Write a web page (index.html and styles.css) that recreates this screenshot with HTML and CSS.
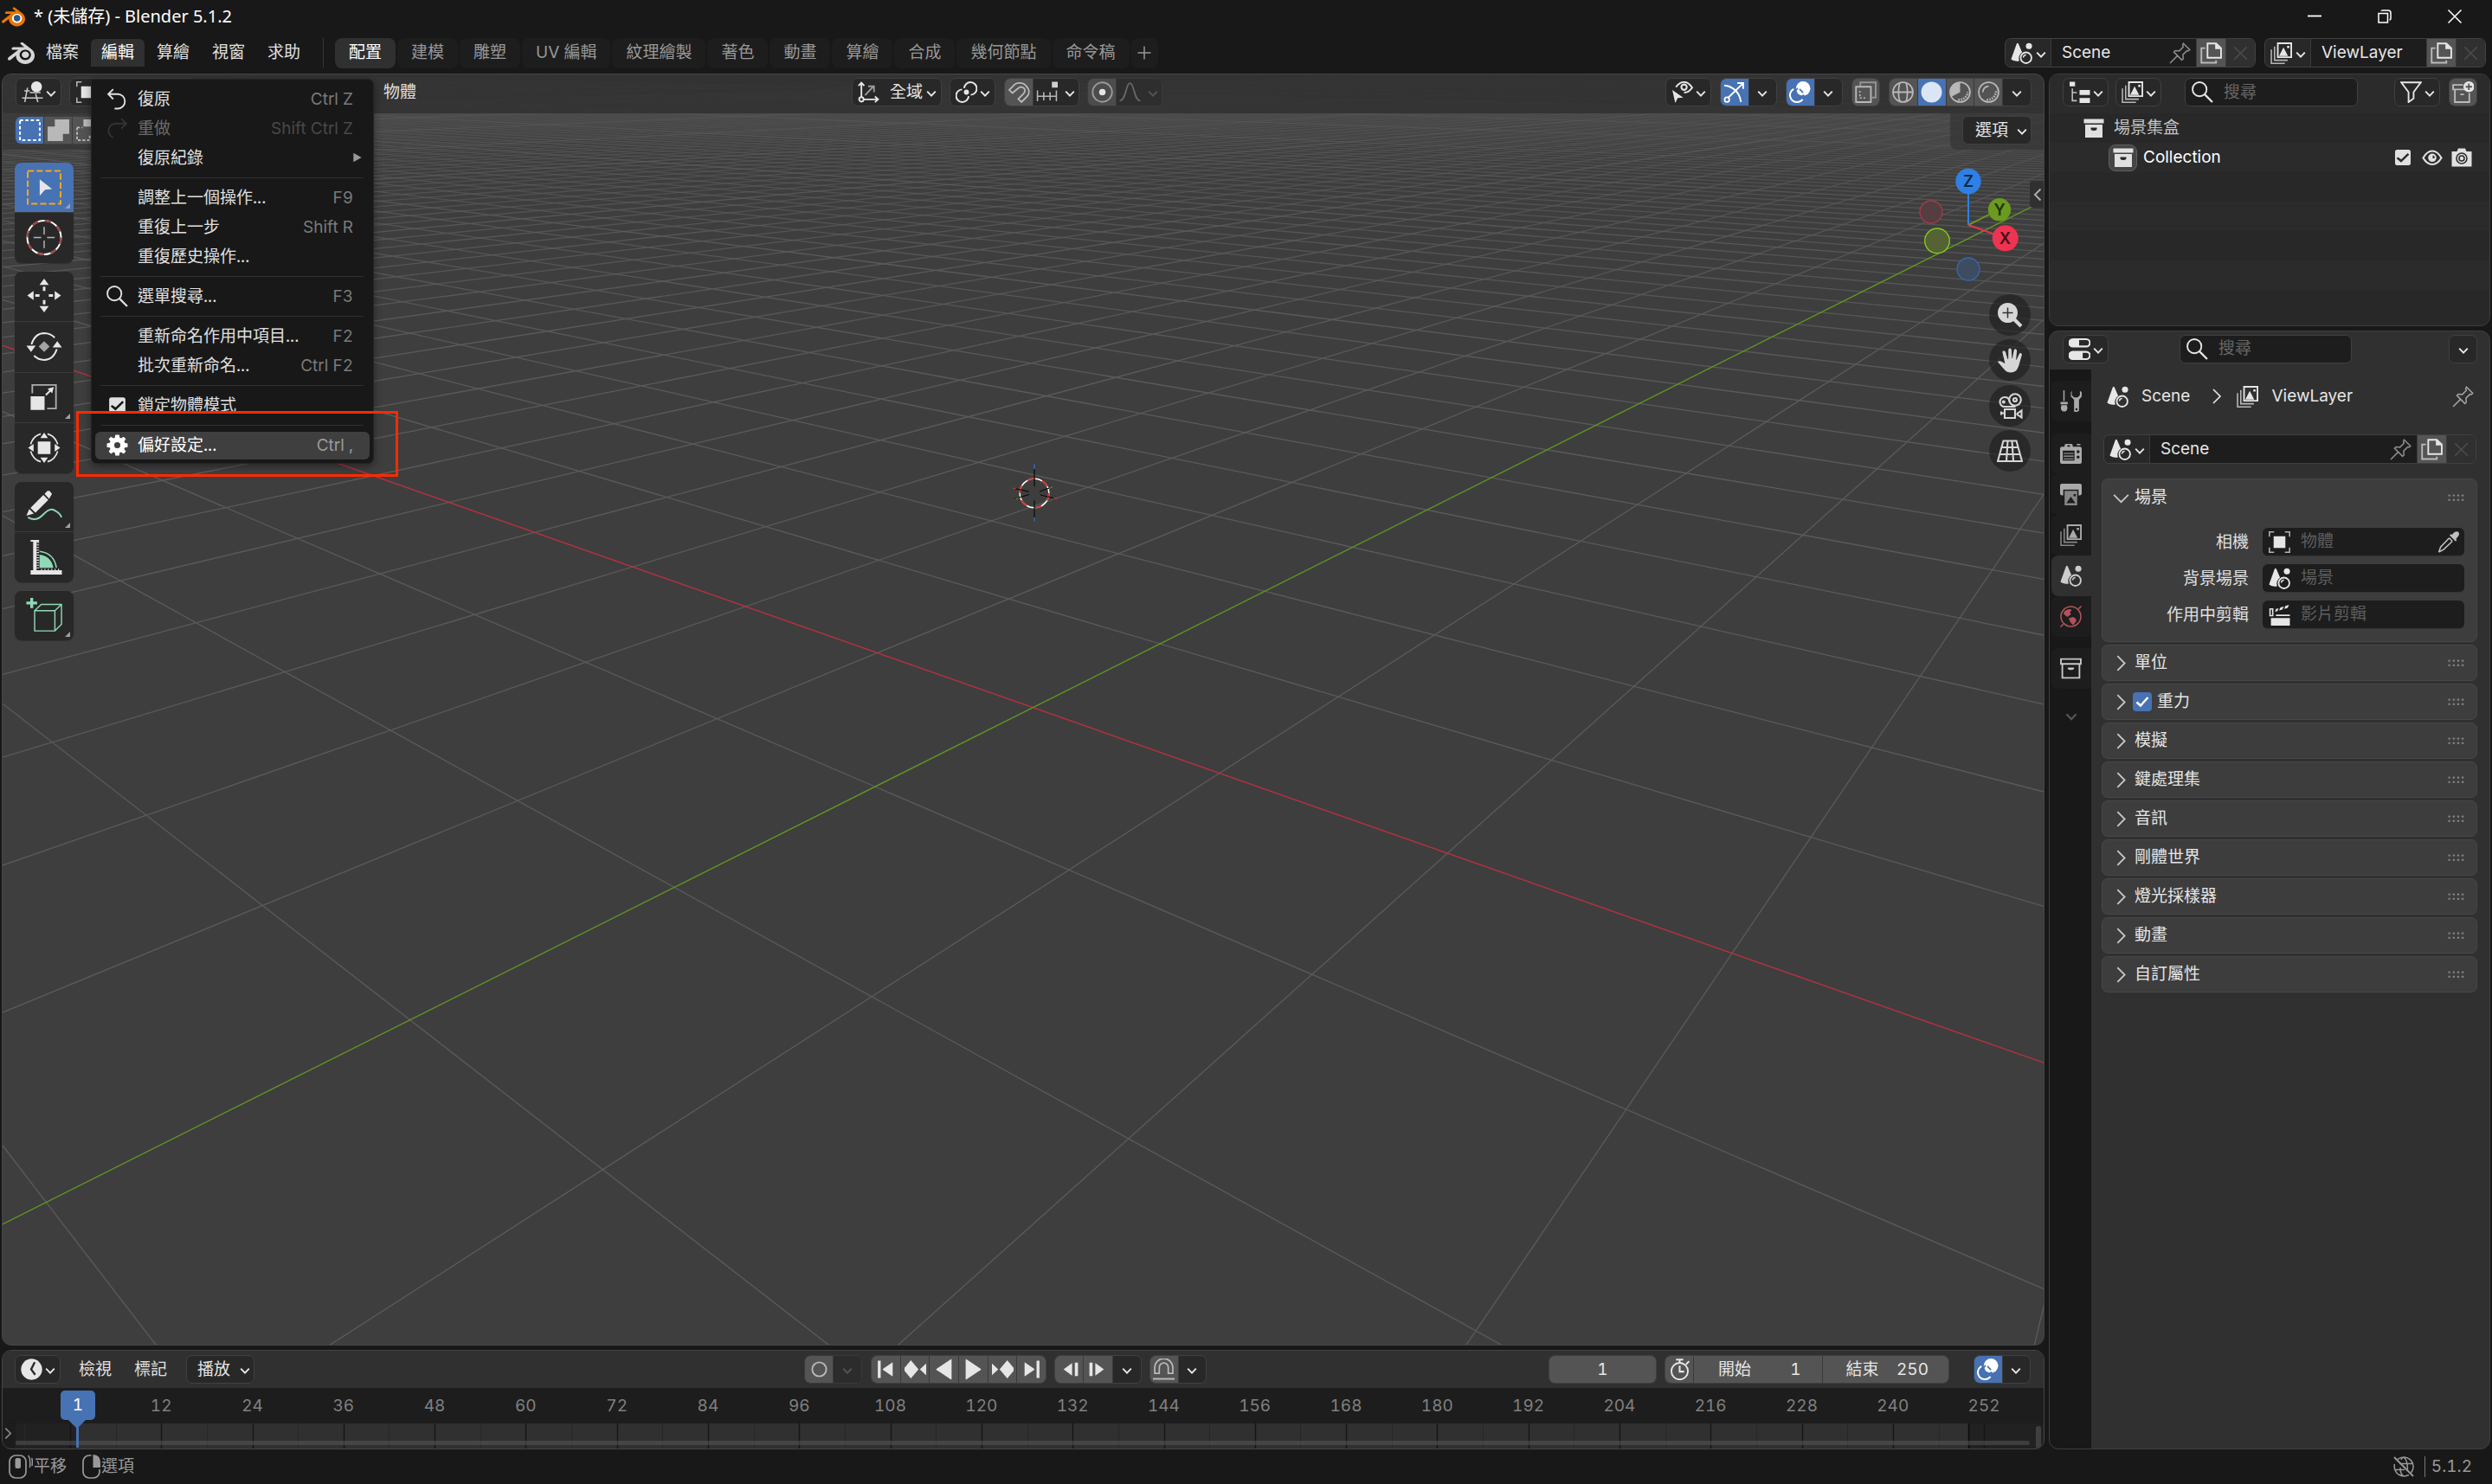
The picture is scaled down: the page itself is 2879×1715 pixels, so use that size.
FILE: index.html
```html
<!DOCTYPE html>
<html lang="zh-Hant">
<head>
<meta charset="utf-8">
<title>* (未儲存) - Blender 5.1.2</title>
<link rel="stylesheet" href="styles.css">
</head>
<body>
<svg class="defs" aria-hidden="true">
  <symbol id="blender" viewBox="0 0 24 24"><path fill="currentColor" d="M12.51 13.214c.046-.8.438-1.506 1.03-2.006a3.424 3.424 0 0 1 2.212-.79c.85 0 1.631.3 2.211.79.592.5.983 1.206 1.028 2.005.045.823-.285 1.586-.865 2.153a3.389 3.389 0 0 1-2.374.938 3.393 3.393 0 0 1-2.376-.938c-.58-.567-.91-1.33-.865-2.152M7.35 14.831c.006.314.106.922.256 1.398a7.372 7.372 0 0 0 1.593 2.757 8.227 8.227 0 0 0 2.787 2.001 8.947 8.947 0 0 0 3.66.76 8.964 8.964 0 0 0 3.657-.772 8.285 8.285 0 0 0 2.785-2.01 7.428 7.428 0 0 0 1.592-2.762 6.964 6.964 0 0 0 .25-3.074 7.123 7.123 0 0 0-1.016-2.779 7.764 7.764 0 0 0-1.852-2.043h.002L13.566 2.55l-.02-.015c-.492-.378-1.319-.376-1.86.002-.547.382-.609 1.015-.123 1.415l-.001.001 3.126 2.543-9.53.01h-.013c-.788.001-1.545.518-1.695 1.172-.154.665.38 1.217 1.2 1.22V8.9l4.83-.01-8.62 6.617-.034.025c-.813.622-1.075 1.658-.563 2.315.52.667 1.625.668 2.447.004L7.414 14s-.069.52-.063.831zm12.09 1.741c-.97.988-2.326 1.548-3.795 1.55-1.47.004-2.827-.552-3.797-1.538a4.51 4.51 0 0 1-1.036-1.622 4.282 4.282 0 0 1 .282-3.519 4.702 4.702 0 0 1 1.153-1.371c.942-.768 2.141-1.183 3.396-1.185 1.256-.002 2.455.41 3.398 1.175.48.391.87.854 1.152 1.367a4.28 4.28 0 0 1 .522 1.706 4.236 4.236 0 0 1-.239 1.811 4.54 4.54 0 0 1-1.035 1.626"/></symbol>
  <symbol id="chev" viewBox="0 0 12 12"><path class="s" stroke-width="1.9" d="M1.2 3.6 6 8.6 10.8 3.6"/></symbol>
  <symbol id="chev-l" viewBox="0 0 24 24"><path class="s" stroke-width="1.7" d="M4 8.5 12 16.500 20 8.5"/></symbol>
  <symbol id="chev-r" viewBox="0 0 24 24"><path class="s" stroke-width="1.7" d="M8 4 16 12 8 20"/></symbol>
  <symbol id="scene" viewBox="0 0 24 24"><path class="f" d="M6.6 1.4Q7.6-.2 8.500 1.400L12.600 11A8 8 0 0 0 9.500 20.600Q3 21.500.4 18.800Z"/><circle class="f" cx="20.200" cy="4" r="3.400"/><circle class="s" cx="17" cy="17" r="6"/><path class="s" stroke-width="1.4" d="M14 16.800a3 3 0 0 1 3-2.900"/></symbol>
  <symbol id="layers" viewBox="0 0 24 24"><path class="s" d="M8.200.9h14.900v15.500H8.200z"/><path class="f" d="M9.600 15 14.500 5.500 19.500 15zM18.500 3.800h2.500v2.500h-2.500z"/><path class="s" stroke-width="1.500" opacity=".75" d="M4.600 4.500v15.300h14.500M1 8v15.200h15"/></symbol>
  <symbol id="pin" viewBox="0 0 24 24"><path class="s" stroke-width="1.500" d="m15.800 1.200 7 7-1.600 1.300-1.500-.3-4.400 4.400.3 4.600-1.500 1.300L5.300 10.700l1.300-1.500 4.600.3 4.400-4.400-.6-2zM9 15l-8 8"/></symbol>
  <symbol id="copy" viewBox="0 0 24 24"><path class="s" d="M8 1.200h9.500l5.500 5.300V17H8z"/><path class="f" d="M16.500 1v6.500H23z"/><path class="s" opacity=".7" d="M5.500 6.300H1.200v16.300h16.300V20"/></symbol>
  <symbol id="x" viewBox="0 0 24 24"><path class="s" stroke-width="1.500" d="m5 5 14 14M19 5 5 19"/></symbol>
  <symbol id="plus" viewBox="0 0 24 24"><path class="s" d="M12 3v18M3 12h18"/></symbol>
  <symbol id="search" viewBox="0 0 24 24"><circle class="s" cx="8.800" cy="8.800" r="7.800"/><path class="s" stroke-width="2.200" d="m14.500 14.500 8.500 8.500"/></symbol>
  <symbol id="view3d" viewBox="0 0 24 24"><g opacity=".85"><path class="s" stroke-width="1.500" d="M3 10.500h6M.5 18.500h23M6.500 7 3.500 23M15.500 14l2.500 9M9 12.500h12"/></g><circle class="f" cx="16.500" cy="6" r="6"/></symbol>
  <symbol id="object" viewBox="0 0 24 24"><path class="f" d="M5.500 5.500h13v13h-13z"/><path class="s" stroke-width="1.500" opacity=".75" d="M.8 6V.8H6M18 .8h5.200V6M23.200 18v5.200H18M6 23.200H.8V18"/></symbol>
  <symbol id="undo" viewBox="0 0 24 24"><path class="s" d="M7.500 1 2 6.500 7.500 12M2 6.500h10.500a8 8 0 0 1 0 16H9"/></symbol>
  <symbol id="redo" viewBox="0 0 24 24"><path class="s" d="M16.500 1 22 6.500 16.500 12M22 6.500H10.500a8 8 0 0 0-3 15.500"/></symbol>
  <symbol id="gear" viewBox="0 0 24 24"><path class="f" fill-rule="evenodd" d="M9.900.5h4.200l.6 3.200 1.600.7L19 2.600l2.500 2.500L19.700 7.800l.6 1.600 3.200.6v4.100l-3.200.6-.6 1.600 1.800 2.700L19 21.500l-2.700-1.800-1.600.6-.6 3.200H9.900l-.6-3.200-1.600-.6L5 21.500 2.500 19l1.800-2.700-.6-1.600-3.200-.6V10l3.200-.6.6-1.600L2.500 5.100 5 2.600l2.700 1.800 1.600-.7zM12 8.600a3.400 3.400 0 1 0 0 6.800 3.400 3.400 0 0 0 0-6.800z"/></symbol>
  <symbol id="check" viewBox="0 0 24 24"><path fill="currentColor" fill-rule="evenodd" d="M5.500 3h13A2.500 2.500 0 0 1 21 5.500v13a2.500 2.500 0 0 1-2.500 2.500h-13A2.500 2.500 0 0 1 3 18.500v-13A2.500 2.500 0 0 1 5.500 3zM6.200 11.500l-1.500 1.700 5.300 4.600 9.300-9.100-1.700-1.800-7.500 7.300z"/></symbol>
  <symbol id="orient" viewBox="0 0 24 24"><circle class="s" cx="4" cy="20" r="2.500"/><path class="s" d="M4 17.500V2M.8 5 4 1.500 7.200 5M6.500 20H22M19 16.800l3.500 3.200-3.500 3.200"/><path class="s" opacity=".6" d="M8 15.500 17 6M11.500 5.500H18V12"/></symbol>
  <symbol id="pivot" viewBox="0 0 24 24"><circle class="f" cx="12" cy="12" r="2.800"/><path class="s" stroke-width="1.900" d="M9.500 7.500A7 7 0 1 1 16.800 15M14.500 16.500A7 7 0 1 1 7.200 9"/></symbol>
  <symbol id="magnet" viewBox="0 0 24 24"><path class="s" d="M1 9.500 4.600 6 A9.500 9.500 0 0 1 20 5.500C24 9.500 23.500 14 20 17.500L14.500 23 11 19.500 16.500 14C19 11.500 18.800 9 17 7.500 15 5.800 12.500 6 10.500 8L4.500 13z"/></symbol>
  <symbol id="snap" viewBox="0 0 24 24"><path class="s" stroke-width="1.500" opacity=".85" d="M1.500 10v12M8.500 12v9M15.500 12v9M22.500 10v12M1 16.500h22"/><path class="f" d="M17.500.5h6.500v6.500h-6.500z"/></symbol>
  <symbol id="prop" viewBox="0 0 24 24"><circle class="f" cx="12" cy="12" r="3.600"/><circle class="s" opacity=".5" cx="12" cy="12" r="10.800"/></symbol>
  <symbol id="falloff" viewBox="0 0 24 24"><path class="s" d="M.5 21.500C8 21.500 7 2 12 2s4 19.500 11.500 19.500"/></symbol>
  <symbol id="vis" viewBox="0 0 24 24"><path class="s" stroke-width="1.900" d="M5 6.500Q9 .8 14 .8t9 6.200q-3.500 5.500-9 5.500"/><circle class="s" stroke-width="2" cx="14" cy="6.500" r="3"/><path class="f" d="M1 9.500 13 18l-6 .5L4.200 24z"/></symbol>
  <symbol id="gizmo" viewBox="0 0 24 24"><circle class="s" stroke-width="1.700" cx="4" cy="20.300" r="2.600"/><path class="s" stroke-width="1.900" d="M5.500 18 21 3M15.500 2H22v6.500M1 4.500C9 5 18 11 19.500 23"/></symbol>
  <symbol id="overlay" viewBox="0 0 24 24"><circle class="f" cx="15.500" cy="8" r="8"/><path class="s" stroke-width="1.900" d="M5 8.500A7.800 7.800 0 1 0 15 20"/><path fill="none" stroke="#4772b3" stroke-width="1.700" d="M6.500 14q0-4 3-6.500M9.500 17.300q4 .5 7-2.300M11.500 8.500l4 4"/></symbol>
  <symbol id="xray" viewBox="0 0 24 24"><path class="s" d="M1.200 6h16.500v17H1.200z"/><path class="s" opacity=".65" d="M6 5V1.200h17V18h-4"/><path class="s" stroke-width="1.500" stroke-dasharray="2 2" d="M5.500 10.500v8h8"/></symbol>
  <symbol id="wire" viewBox="0 0 24 24"><g class="s" stroke-width="1.700"><circle cx="12" cy="12" r="11"/><path d="M1 12h22M8.500 1.500q-3 10.500 0 21M15.500 1.500q3 10.500 0 21"/></g></symbol>
  <symbol id="solid" viewBox="0 0 24 24"><circle class="f" cx="12" cy="12" r="11.500"/></symbol>
  <symbol id="matprev" viewBox="0 0 24 24"><circle class="s" stroke-width="1.700" cx="12" cy="12" r="11"/><path class="f" d="M12 1v11l-9.500 5A11 11 0 0 1 12 1z"/><path class="s" stroke-width="2.500" stroke-dasharray="1.500 1.300" d="M10 20.500Q19.500 20 20.500 12"/></symbol>
  <symbol id="render" viewBox="0 0 24 24"><circle class="s" stroke-width="1.700" cx="12" cy="12" r="11"/><path class="s" stroke-width="1.700" d="M5.500 12A6.500 6.500 0 0 1 12 5.500"/><path class="s" stroke-width="2.500" stroke-dasharray="1.500 1.300" d="M10 20.500Q19.500 20 20.500 10"/></symbol>
  <symbol id="outliner" viewBox="0 0 24 24"><path class="f" d="M1 .5h6v5H1zM12 9.500h11.500V15H12zM12 18.500h11.500V24H12z"/><path class="s" stroke-width="1.500" opacity=".8" d="M4 8v13.500h5M4 12.500h5"/></symbol>
  <symbol id="filter" viewBox="0 0 24 24"><path class="s" d="M1.200 1.200h21.600L14.800 12v7L9.200 23V12z"/></symbol>
  <symbol id="newcol" viewBox="0 0 24 24"><path class="s" opacity=".7" d="M12 4H1v5h14M3 9.500V23h16V13M9 14.500h4"/><circle class="f" cx="18.500" cy="6" r="6"/><path fill="none" stroke="#545454" stroke-width="1.700" d="M18.500 2.500v7M15 6h7"/></symbol>
  <symbol id="box" viewBox="0 0 24 24"><path class="f" d="M.5 1.500h23v5H.5zM2 8h20v15H2z"/><path fill="#282828" d="M8.500 11.500h7v2q-1 1.500-3.500 1.500t-3.500-1.500z"/></symbol>
  <symbol id="box-o" viewBox="0 0 24 24"><path class="s" d="M1 1.500h22v5.500H1zM2.500 8v14.500h19V8"/><path class="f" d="M8.500 11h7v1.500q-1 1.200-3.500 1.200t-3.500-1.200z"/></symbol>
  <symbol id="eye" viewBox="0 0 24 24"><path class="s" stroke-width="2.200" d="M1.500 12.500Q6 4.500 12 4.500t10.500 8Q18 20 12 20T1.500 12.500z"/><circle class="f" cx="12" cy="12.300" r="4.800"/><path fill="#2b2b2b" d="M12.500 9.500a2.500 2.500 0 0 1 2 3.500h-2z"/></symbol>
  <symbol id="camera" viewBox="0 0 24 24"><path class="f" d="M.5 5h6l1.500-3.500h8L17.500 5h6v17.500H.5z"/><circle cx="12" cy="13" r="6" fill="none" stroke="#2b2b2b" stroke-width="1.600"/><circle cx="12" cy="13" r="3" fill="none" stroke="#2b2b2b" stroke-width="1.600"/></symbol>
  <symbol id="props" viewBox="0 0 24 24"><path class="f" fill-rule="evenodd" d="M4.500 0h15a4.700 4.700 0 0 1 0 10h-15a4.700 4.700 0 0 1 0-10zM11.500 2v6h8a3 3 0 0 0 0-6zM4.500 14h15a4.700 4.700 0 0 1 0 10h-15a4.700 4.700 0 0 1 0-10zM15.500 16v6h4a3 3 0 0 0 0-6z"/></symbol>
  <symbol id="tool" viewBox="0 0 24 24"><path class="f" d="M3.600 0h1.400v12H3.600zM.5 13h8v2.500h-8zM1.500 16.500h6q1.500 5-1 6.500-2 1-4 0-2.500-1.500-1-6.500z"/><path class="f" fill-rule="evenodd" d="M13 .5v5l2.500 2.500h4L22 5.500v-5l2 2V7l-3 3.500v12Q19.500 24.500 16 24q-.5-.5-.5-1.500v-12L12 7V2.500zM18.200 20a1.200 1.200 0 1 0 0 2.400 1.200 1.200 0 0 0 0-2.400z"/></symbol>
  <symbol id="rendertab" viewBox="0 0 24 24"><path class="f" fill-rule="evenodd" d="M5 4V2.500Q5 1 6.500 1h6Q14 1 14 2.500V4h8q2 0 2 2v15q0 2-2 2H2q-2 0-2-2V6q0-2 2-2zM3 8.500v11h13v-11zM20 8a1.700 1.700 0 1 0 0 3.400A1.700 1.700 0 0 0 20 8zM20 14a1.700 1.700 0 1 0 0 3.400A1.700 1.700 0 0 0 20 14zM8 2.500V4h3V2.500z"/><path class="f" d="M18.500 1h4v1.500h-4zM4 11h11v1H4zM4 14h11v1H4zM4 17h11v1H4z"/></symbol>
  <symbol id="output" viewBox="0 0 24 24"><path class="f" d="M2 0h20q2 0 2 2v9q0 1.500-2 2h-1.500V6.500h-17V13H2q-2-.5-2-2V2q0-2 2-2z"/><path class="f" opacity=".75" fill-rule="evenodd" d="M5 8h14v16H5zM7 21.500h10l-5-7zM15 11.500v2.500h2.500v-2.500z"/></symbol>
  <symbol id="world" viewBox="0 0 24 24"><circle class="s" stroke-width="1.500" cx="12" cy="12" r="11"/><path class="s" stroke-width="1.500" d="m.5 23.500 3-3M20.500 3.500l3-3"/><path class="f" d="M4.500 6.500Q8 3 12.500 4q.5 2-1.500 3l1 2.500-4 3L4 9zM9.500 14l5-1.500 3 2 .5 2.500-3.500 4.500-3-3z"/></symbol>
  <symbol id="dropper" viewBox="0 0 24 24"><path class="f" d="M20 .5q4-1 4 3-.5 2-3.500 5l1 1.500-1.500 1-6.500-6.500L14.500 3l1.500.8Q18.500 1 20 .5z"/><path class="s" stroke-width="1.500" d="m13 7.500-9.500 10L1.500 23M16.500 11 7 20l-5.500 3M13 7.500 16.500 11"/></symbol>
  <symbol id="clip" viewBox="0 0 24 24"><path class="f" d="M2.500 15.500h21V24h-21zM8 11.800h15.500v1.700H8zM8 5.500l3-.8L9.700 8l-2.500.6zM13 3.800l4-1-2 3.500-3.500.9zM18.500 2.200l4-1.200-1.500 3.400-3.700 1z"/><path class="s" stroke-width="1.500" d="M1.500 5.500h3V13h-3z"/></symbol>
  <symbol id="clock" viewBox="0 0 24 24"><circle class="f" cx="12" cy="12" r="11.700"/><path fill="none" stroke="#282828" stroke-width="2.200" d="M15.500 4 11.500 12l4.500 6"/></symbol>
  <symbol id="stopwatch" viewBox="0 0 24 24"><circle class="s" cx="12" cy="14" r="9.200"/><path class="s" stroke-width="2" d="M8 1.200h8M12 1.500V5M12 8v6.500h5M19 6.500 22.500 3"/></symbol>
  <symbol id="record" viewBox="0 0 24 24"><circle class="s" cx="12" cy="12" r="7.800"/></symbol>
  <symbol id="tfirst" viewBox="0 0 24 24"><path class="f" d="M3 2.500h3.200v19H3zM19.500 5v14Q19.500 20 18.500 19.300L9 12.800Q8 12 9 11.200L18.500 4.700Q19.500 4 19.500 5z"/></symbol>
  <symbol id="tprevk" viewBox="0 0 24 24"><path class="f" d="M7 2 15.500 12 7 22l-8.500-10zM25 4.500v15L17 12z"/></symbol>
  <symbol id="tback" viewBox="0 0 24 24"><path class="f" d="M20.500 1.500v21q0 1-1 .6L4 12.800Q3 12 4 11.200L19.500.9q1-.4 1 .6z"/></symbol>
  <symbol id="trwd" viewBox="0 0 24 24"><path class="f" d="M15 5v14L5.500 12zM18 4.500h3.500v15H18z"/></symbol>
  <symbol id="asnap" viewBox="0 0 24 24"><path class="s" stroke-width="1.700" d="M2 16.500V10a10 10 0 0 1 20 0v6.500h-5V10a5 5 0 0 0-10 0v6.500z"/><path class="s" stroke-width="1.900" d="M-.5 22.500h25"/></symbol>
  <symbol id="tri" viewBox="0 0 24 24"><path class="f" d="M4 3 20 12 4 21z"/></symbol>
  <symbol id="globe" viewBox="0 0 24 24"><g class="s" stroke-width="1.500"><path d="M5 3.500a11 11 0 0 1 15.500 15.500M1.300 9q-1 8 4.700 12 6 3.500 12 .5M7.500 8.500h15M1.500 15.500H13M8 13q0 8 4 10M9 4q1-2.500 3-3 4.500 3.500 4.500 14"/><path stroke-width="2" d="m1 1 22 22"/></g></symbol>
  <symbol id="mouse-m" viewBox="0 0 28 28"><rect class="s" stroke-width="1.700" x="1" y="1" width="19" height="26" rx="7"/><rect class="f" x="7.500" y="4" width="6.500" height="12" rx="2"/><path class="s" stroke-width="1.500" d="M22.500 1q3 3 2 14M26.500 4q1.500 2 .5 9"/></symbol>
  <symbol id="mouse-r" viewBox="0 0 28 28"><path class="s" stroke-width="1.700" d="M10.500 1H8a7 7 0 0 0-7 7v12a7 7 0 0 0 7 7h5a7 7 0 0 0 7-7v-3"/><path class="f" d="M12.500 0Q21 .5 21 9v6h-8.500z"/></symbol>
  <symbol id="nzoom" viewBox="0 0 30 30"><circle class="f" cx="12.500" cy="12.500" r="11.500"/><path class="s" stroke-width="4" d="m20 20 8 8"/><path fill="none" stroke="#303030" stroke-width="1.500" d="M12.500 6.500v12M6.500 12.500h12"/></symbol>
  <symbol id="nhand" viewBox="0 0 30 30"><path class="f" d="M15 1.500q1.700 0 1.900 2l.4 9.500.6 0 1.800-9.200q.6-1.800 2.100-1.400 1.500.4 1.300 2.300l-1 9.800.6.300L25.800 8q.9-1.300 2.200-.7 1.300.7.800 2.300L26 19q-1.500 6-4 8.500-2.500 2-6 2-4.500 0-7-3L2.500 19Q.5 17.500 1.500 16.500q2-1 5 1l2.500 1.500.3-.5L6.500 6.500Q6.200 4.500 7.800 4.200 9.200 4 9.900 5.700l2.500 8.300.8-.2.1-10.300q.1-2 1.700-2z"/></symbol>
  <symbol id="ncam" viewBox="0 0 30 30"><g class="s" stroke-width="2.100"><circle cx="21" cy="8" r="6.800"/><path d="M14.500 10Q14 5 9 5a5.500 5.500 0 1 0 0 11h12.500"/><path d="M9 19h12v10H9zM9 23.500H5M5 21.500v4M28.500 20.500v8L23.500 25v-1z"/></g><circle class="s" stroke-width="2.200" cx="21" cy="8" r="2"/><circle class="f" cx="7.800" cy="10.500" r="2"/></symbol>
  <symbol id="ngrid" viewBox="0 0 30 30"><path class="s" stroke-width="2.100" d="M7.500 3.500h15L29 27H1zM5.500 11h19M3.500 19h23.500M12.500 3.500 11 27M17.500 3.500 19 27"/></symbol>
</svg>

<header class="titlebar">
  <svg class="logo" viewBox="0 0 24 24"><circle cx="15.700" cy="13.400" r="6" fill="#fff"/><use href="#blender" color="#ea7600"/><circle cx="15.700" cy="13.400" r="3.300" fill="#265787"/></svg>
  <h1>* (未儲存) - Blender 5.1.2</h1>
  <div class="win">
    <svg viewBox="0 0 16 16"><path class="s" d="M0 7.500h16"/></svg>
    <svg viewBox="0 0 16 16"><path class="s" stroke-width="1.500" d="M1 4.500h10.500V15H1zM4 1.800Q4 1 6 1h6q3 0 3 3v6q0 2-1.500 2"/></svg>
    <svg viewBox="0 0 16 16"><path class="s" stroke-width="1.500" d="m.5.500 15 15M15.500.5l-15 15"/></svg>
  </div>
</header>

<nav class="topbar">
  <svg class="app"><use href="#blender"/></svg>
  <a class="m">檔案</a><a class="m on">編輯</a><a class="m">算繪</a><a class="m">視窗</a><a class="m">求助</a>
  <i class="vr"></i>
  <div class="tabs">
    <a class="on">配置</a><a>建模</a><a>雕塑</a><a>UV 編輯</a><a>紋理繪製</a><a>著色</a><a>動畫</a><a>算繪</a><a>合成</a><a>幾何節點</a><a>命令稿</a><a class="add"><svg><use href="#plus"/></svg></a>
  </div>
  <div class="grp sel scene-sel">
    <span class="cell dd"><svg><use href="#scene"/></svg><svg class="c"><use href="#chev"/></svg></span>
    <span class="cell name"><b>Scene</b><svg class="dim"><use href="#pin"/></svg></span>
    <span class="cell g"><svg><use href="#copy"/></svg></span>
    <span class="cell off"><svg><use href="#x"/></svg></span>
  </div>
  <div class="grp sel layer-sel">
    <span class="cell dd"><svg><use href="#layers"/></svg><svg class="c"><use href="#chev"/></svg></span>
    <span class="cell name"><b>ViewLayer</b></span>
    <span class="cell g"><svg><use href="#copy"/></svg></span>
    <span class="cell off"><svg><use href="#x"/></svg></span>
  </div>
</nav>

<main>
  <div class="left">
    <section class="area viewport">
      <svg class="grid" id="grid" viewBox="3 86 2358 1468" preserveAspectRatio="none">
        <defs>
          <linearGradient id="fadeMinor" gradientUnits="userSpaceOnUse" x1="0" y1="86" x2="0" y2="460"><stop offset="0" stop-color="#5a5a5a" stop-opacity=".1"/><stop offset=".2" stop-color="#5a5a5a" stop-opacity=".45"/><stop offset=".5" stop-color="#5a5a5a" stop-opacity=".8"/><stop offset="1" stop-color="#5a5a5a"/></linearGradient>
          <linearGradient id="fadeMajor" gradientUnits="userSpaceOnUse" x1="0" y1="66" x2="0" y2="320"><stop offset="0" stop-color="#5a5a5a" stop-opacity=".1"/><stop offset=".3" stop-color="#5a5a5a" stop-opacity=".7"/><stop offset="1" stop-color="#5a5a5a"/></linearGradient>
        </defs>
      </svg>
      <svg class="cursor" viewBox="0 0 56 70">
        <circle cx="28" cy="35" r="16.800" fill="none" stroke="#fff" stroke-width="1.500"/>
        <circle cx="28" cy="35" r="16.800" fill="none" stroke="#e0281e" stroke-width="1.600" stroke-dasharray="8.800 8.790"/>
        <g fill="none" stroke="#0a0a0a" stroke-width="1.200"><path d="M28 7v20M28 43.500V63M5 29.500l16.500 3.700M35 37l17 4M34 33l14-5M22 36.500l-17 5"/></g>
        <path stroke="#2f80e6" d="M28 1.500V7M28 63v4.500"/><path stroke="#e03248" d="m3 29 3.500.7M50 40.500l4 .8"/><path stroke="#6da21e" d="m45 29.300 4-1.500M9.500 40.500 6 42"/>
      </svg>
      <div class="vhead">
        <div class="grp b52"><span class="cell dd"><svg><use href="#view3d"/></svg><svg class="c"><use href="#chev"/></svg></span></div>
        <div class="grp mode"><span class="cell"><svg><use href="#object"/></svg></span></div>
        <a class="objmenu">物體</a>
        <div class="grp orient"><span class="cell dd"><svg><use href="#orient"/></svg><em>全域</em><svg class="c"><use href="#chev"/></svg></span></div>
        <div class="grp b52 pivot"><span class="cell dd"><svg><use href="#pivot"/></svg><svg class="c"><use href="#chev"/></svg></span></div>
        <div class="grp snapg"><span class="cell g"><svg class="soft"><use href="#magnet"/></svg></span><span class="cell dd"><svg class="soft2"><use href="#snap"/></svg><svg class="c"><use href="#chev"/></svg></span></div>
        <div class="grp snapg faded"><span class="cell g"><svg><use href="#prop"/></svg></span><span class="cell dd"><svg class="dim"><use href="#falloff"/></svg><svg class="c dim2"><use href="#chev"/></svg></span></div>
        <div class="grp b52 visg"><span class="cell dd"><svg><use href="#vis"/></svg><svg class="c"><use href="#chev"/></svg></span></div>
        <div class="grp two"><span class="cell blue"><svg><use href="#gizmo"/></svg></span><span class="cell"><svg class="c"><use href="#chev"/></svg></span></div>
        <div class="grp two"><span class="cell blue"><svg><use href="#overlay"/></svg></span><span class="cell"><svg class="c"><use href="#chev"/></svg></span></div>
        <div class="grp one"><span class="cell g"><svg class="soft"><use href="#xray"/></svg></span></div>
        <div class="grp shade"><span class="cell g"><svg class="soft"><use href="#wire"/></svg></span><span class="cell blue"><svg class="pale"><use href="#solid"/></svg></span><span class="cell g"><svg class="soft"><use href="#matprev"/></svg></span><span class="cell g"><svg class="soft"><use href="#render"/></svg></span><span class="cell"><svg class="c"><use href="#chev"/></svg></span></div>
      </div>
      <div class="vsub">
        <div class="slab sl">
          <div class="grp modes"><span class="cell blue"><svg viewBox="0 0 24 24"><path class="s" stroke-width="2" stroke-dasharray="3.500 2.500" d="M1 1h22v22H1z"/></svg></span><span class="cell g"><svg viewBox="0 0 24 24" class="soft"><path class="f" d="M8 0h16v16h-7v8H0V8h8z"/></svg></span><span class="cell g"><svg viewBox="0 0 24 24" class="soft"><path class="f" d="M8 0h16v16h-7V8H8z"/><path class="s" stroke-dasharray="3 2" d="M1 9v14h14v-6M1 9h6"/></svg></span></div>
        </div>
        <div class="slab sr"><div class="grp opts"><span class="cell dd"><em>選項</em><svg class="c"><use href="#chev"/></svg></span></div></div>
      </div>
      <div class="tools">
        <div class="tg">
          <span class="t on"><svg viewBox="0 0 40 40"><path fill="none" stroke="#f5a623" stroke-width="2" stroke-dasharray="7 3" d="M1.500 1.500h37v37h-37z"/><path class="f" d="m15 11 14 11-8 .8L15 29.500z"/></svg><i></i></span>
          <span class="t"><svg viewBox="0 0 42 42"><circle cx="21" cy="21" r="20" fill="none" stroke="#fff" stroke-width="2"/><circle cx="21" cy="21" r="20" fill="none" stroke="#9c4346" stroke-width="2.200" stroke-dasharray="7.850 7.850"/><path class="s" stroke-width="1.500" opacity=".75" d="M21 8.500v9M21 24.500v9M8.500 21h9M24.500 21h9"/></svg></span>
        </div>
        <div class="tg">
          <span class="t"><svg viewBox="0 0 42 42"><path class="f" d="m21 1 5.500 7.500h-11zM21 41l5.500-7.500h-11zM1 21l7.500-5.500v11zM41 21l-7.500-5.500v11zM19.500 10.500h3v5h-3zM19.500 26.500h3v5h-3zM10.500 19.500h5v3h-5zM26.500 19.500h5v3h-5z"/></svg></span>
          <span class="t"><svg viewBox="0 0 42 42"><path class="s" stroke-width="2" d="M6 18.500Q10 5.500 21 5.200q7.500.2 12.500 5.300M36 24q-4 12.500-15 12.800-7 0-12-5"/><path class="f" d="M0 20h11L5.500 27.500zM31 22l5.500-7.500L42 22z"/><path class="f" opacity=".65" d="m21 14.500 6.500 6.500-6.500 6.500-6.500-6.500z"/></svg></span>
          <span class="t"><svg viewBox="0 0 42 42"><path class="s" stroke-width="1.900" opacity=".7" d="M7 17V7h28v28H24.500"/><path class="f" d="M5 20.500h16.500v16H5z"/><path class="s" stroke-width="2" d="m23 19 6-6"/><path class="f" d="M25 11.500 32.500 9.500 30.500 17z"/></svg><i></i></span>
          <span class="t"><svg viewBox="0 0 42 42"><path class="s" stroke-width="1.700" d="M5 17Q8 7 17 4.500M25 4.500Q34 7 37 17M37 25q-3 10-12 12.500M17 37.500Q8 35 5 25"/><path class="f" d="M13.500 13.500h15v15h-15zM21 3l4.500 6.500h-9zM21 39l4.500-6.500h-9zM2 21l6.500-4.500v9zM40 21l-6.500-4.500v9z"/></svg></span>
        </div>
        <div class="tg">
          <span class="t"><svg viewBox="0 0 44 42"><path fill="none" stroke="#8fd9b6" stroke-width="2" d="M2.500 35Q12 41 21 31.500t15-4Q41 30 43 35"/><path class="f" d="m.5 33 3.500-8 5.500 5.500zM5.500 23.500 21 8l6 6-15.500 15.500zM22.500 6.500 26 3l2.500 0 3 3.500-3.500 6z"/></svg><i></i></span>
          <span class="t"><svg viewBox="0 0 42 42"><path class="f" d="M5 1h10v2h-3v34h-4V3H5zM5 37h37v5H5z"/><path class="s" stroke-width="1.100" d="M12 4h3M12 7h3M12 10h3M12 13h3M12 16h3M12 19h3M12 22h3M12 25h3M12 28h3M12 31h3M12 34h3M18 35v3M22 35v3M26 35v3M30 35v3M34 35v3M38 35v3"/><path fill="#8fd9b6" d="M15.500 18.500Q29 20 32 34H15.500z"/><path fill="none" stroke="#8fd9b6" stroke-width="1.600" d="M15.500 14.500Q33 16.500 35.500 34"/></svg></span>
        </div>
        <div class="tg">
          <span class="t"><svg viewBox="0 0 44 42"><path fill="none" stroke="#8fd9b6" stroke-width="1.500" d="M10.500 16h24.500v24.500H10.500zM10.500 16l8-7.500H43v24L35 40.500M35 16l8-7.500"/><path stroke="#8fd9b6" stroke-width="3.500" d="M7 .5v12.500M.5 6.700h13"/></svg><i></i></span>
        </div>
      </div>
      <svg class="axes" viewBox="0 0 120 120">
        <g fill="none" stroke-width="2"><path stroke="#2f80e6" d="M60 65V15"/><path stroke="#6a9a1f" d="M60 65 96 47"/><path stroke="#e8364f" d="m60 65 42 15"/></g>
        <circle cx="60" cy="116" r="13" fill="#3d4c60" stroke="#3568ae" stroke-width="1.300"/>
        <circle cx="17" cy="50" r="13" fill="#543e41" stroke="#a63a4a" stroke-width="1.300"/>
        <circle cx="24" cy="83.300" r="14.300" fill="#546234" stroke="#86c91c" stroke-width="1.400"/>
        <circle cx="96" cy="47.300" r="13.200" fill="#6a9a1f"/><circle cx="102.700" cy="80.300" r="15" fill="#ed3450"/><circle cx="60" cy="14.500" r="14.700" fill="#2f80e6"/>
        <text x="60" y="21.200" fill="#0e2947">Z</text><text x="96" y="54" fill="#223208">Y</text><text x="102.500" y="87" fill="#4b0e17">X</text>
      </svg>
      <div class="navs"><svg><use href="#nzoom"/></svg><svg><use href="#nhand"/></svg><svg><use href="#ncam"/></svg><svg><use href="#ngrid"/></svg></div>
      <span class="npanel"><svg viewBox="0 0 10 16"><path class="s" stroke-width="2" d="M8.500 1.500 2 8l6.500 6.500"/></svg></span>
    </section>

    <section class="area timeline">
      <div class="thead">
        <div class="grp b52"><span class="cell dd"><svg><use href="#clock"/></svg><svg class="c"><use href="#chev"/></svg></span></div>
        <a class="m t1">檢視</a><a class="m">標記</a>
        <div class="grp playb"><span class="cell dd"><em>播放</em><svg class="c"><use href="#chev"/></svg></span></div>
        <div class="grp two rec"><span class="cell g"><svg class="soft"><use href="#record"/></svg></span><span class="cell dk"><svg class="c dim2"><use href="#chev"/></svg></span></div>
        <div class="grp trans"><span class="cell g"><svg><use href="#tfirst"/></svg></span><span class="cell g"><svg><use href="#tprevk"/></svg></span><span class="cell g"><svg><use href="#tback"/></svg></span><span class="cell g"><svg class="flip"><use href="#tback"/></svg></span><span class="cell g"><svg class="flip"><use href="#tprevk"/></svg></span><span class="cell g"><svg class="flip"><use href="#tfirst"/></svg></span></div>
        <div class="grp jump"><span class="cell g"><svg><use href="#trwd"/></svg></span><span class="cell g"><svg class="flip"><use href="#trwd"/></svg></span><span class="cell"><svg class="c"><use href="#chev"/></svg></span></div>
        <div class="grp two asn"><span class="cell g"><svg class="soft"><use href="#asnap"/></svg></span><span class="cell"><svg class="c"><use href="#chev"/></svg></span></div>
        <div class="grp frame"><span class="cell g"><em>1</em></span></div>
        <div class="grp range"><span class="cell g"><svg><use href="#stopwatch"/></svg></span><span class="cell g num"><em>開始</em><em>1</em></span><span class="cell g num"><em>結束</em><em>250</em></span></div>
        <div class="grp two tov"><span class="cell blue"><svg><use href="#overlay"/></svg></span><span class="cell"><svg class="c"><use href="#chev"/></svg></span></div>
      </div>
      <div class="ruler"><span>12</span><span>24</span><span>36</span><span>48</span><span>60</span><span>72</span><span>84</span><span>96</span><span>108</span><span>120</span><span>132</span><span>144</span><span>156</span><span>168</span><span>180</span><span>192</span><span>204</span><span>216</span><span>228</span><span>240</span><span>252</span></div>
      <svg class="track" id="track" viewBox="3 1645 2358 29"><rect x="90" y="1645" width="2184" height="29" fill="#303030"/></svg>
      <i class="hscroll"></i><i class="vscroll"></i>
      <span class="playhead"><b>1</b></span>
      <span class="chan"><svg viewBox="0 0 10 16"><path class="s" stroke-width="1.900" d="M1.500 1.500 8 8l-6.500 6.500"/></svg></span>
    </section>
  </div>

  <div class="right">
    <section class="area outliner">
      <div class="ohead">
        <div class="grp b52"><span class="cell dd"><svg><use href="#outliner"/></svg><svg class="c"><use href="#chev"/></svg></span></div>
        <div class="grp b52"><span class="cell dd"><svg><use href="#layers"/></svg><svg class="c"><use href="#chev"/></svg></span></div>
        <div class="grp find"><span class="cell"><svg><use href="#search"/></svg><em>搜尋</em></span></div>
        <div class="grp b52 filt"><span class="cell dd"><svg><use href="#filter"/></svg><svg class="c"><use href="#chev"/></svg></span></div>
        <div class="grp one"><span class="cell g"><svg><use href="#newcol"/></svg></span></div>
      </div>
      <div class="rows">
        <div class="row r0"><svg><use href="#box"/></svg><span>場景集盒</span></div>
        <div class="row r1"><i><svg><use href="#box"/></svg></i><span>Collection</span><svg class="ck"><use href="#check"/></svg><svg><use href="#eye"/></svg><svg><use href="#camera"/></svg></div>
        <div class="row"></div><div class="row"></div><div class="row"></div><div class="row"></div><div class="row last"></div>
      </div>
    </section>

    <section class="area props">
      <div class="phead">
        <div class="grp b52"><span class="cell dd"><svg><use href="#props"/></svg><svg class="c"><use href="#chev"/></svg></span></div>
        <div class="grp find"><span class="cell"><svg><use href="#search"/></svg><em>搜尋</em></span></div>
        <div class="grp one"><span class="cell"><svg class="c"><use href="#chev"/></svg></span></div>
      </div>
      <div class="pbody">
        <aside class="ptabs">
          <a class="solo"><svg><use href="#tool"/></svg></a>
          <a><svg><use href="#rendertab"/></svg></a><a><svg><use href="#output"/></svg></a><a><svg><use href="#layers"/></svg></a><a class="on"><svg><use href="#scene"/></svg></a><a class="red"><svg><use href="#world"/></svg></a>
          <a class="col"><svg><use href="#box-o"/></svg></a>
          <svg class="more"><use href="#chev"/></svg>
        </aside>
        <div class="pmain">
          <div class="crumb"><svg><use href="#scene"/></svg><span>Scene</span><svg class="ar"><use href="#chev-r"/></svg><svg><use href="#layers"/></svg><span>ViewLayer</span><svg class="pn"><use href="#pin"/></svg></div>
          <div class="grp sel idrow">
            <span class="cell dd"><svg><use href="#scene"/></svg><svg class="c"><use href="#chev"/></svg></span>
            <span class="cell name"><b>Scene</b><svg class="dim"><use href="#pin"/></svg></span>
            <span class="cell g"><svg><use href="#copy"/></svg></span>
            <span class="cell off"><svg><use href="#x"/></svg></span>
          </div>
          <div class="panel open">
            <div class="ph"><svg><use href="#chev-l"/></svg><span>場景</span><i class="dots"></i></div>
            <div class="fld"><label>相機</label><div><svg><use href="#object"/></svg><em>物體</em><svg class="dr"><use href="#dropper"/></svg></div></div>
            <div class="fld"><label>背景場景</label><div><svg><use href="#scene"/></svg><em>場景</em></div></div>
            <div class="fld"><label>作用中剪輯</label><div><svg><use href="#clip"/></svg><em>影片剪輯</em></div></div>
          </div>
          <div class="panel"><div class="ph"><svg><use href="#chev-r"/></svg><span>單位</span><i class="dots"></i></div></div>
          <div class="panel"><div class="ph"><svg><use href="#chev-r"/></svg><b class="cb"><svg viewBox="0 0 22 22"><path class="s" stroke-width="2.600" d="m4.500 11.500 4.500 4 8.500-9.500"/></svg></b><span>重力</span><i class="dots"></i></div></div>
          <div class="panel"><div class="ph"><svg><use href="#chev-r"/></svg><span>模擬</span><i class="dots"></i></div></div>
          <div class="panel"><div class="ph"><svg><use href="#chev-r"/></svg><span>鍵處理集</span><i class="dots"></i></div></div>
          <div class="panel"><div class="ph"><svg><use href="#chev-r"/></svg><span>音訊</span><i class="dots"></i></div></div>
          <div class="panel"><div class="ph"><svg><use href="#chev-r"/></svg><span>剛體世界</span><i class="dots"></i></div></div>
          <div class="panel"><div class="ph"><svg><use href="#chev-r"/></svg><span>燈光採樣器</span><i class="dots"></i></div></div>
          <div class="panel"><div class="ph"><svg><use href="#chev-r"/></svg><span>動畫</span><i class="dots"></i></div></div>
          <div class="panel"><div class="ph"><svg><use href="#chev-r"/></svg><span>自訂屬性</span><i class="dots"></i></div></div>
        </div>
      </div>
    </section>
  </div>
</main>

<footer>
  <svg><use href="#mouse-m"/></svg><span>平移</span>
  <svg class="m2"><use href="#mouse-r"/></svg><span>選項</span>
  <svg class="gl"><use href="#globe"/></svg><i></i><span class="ver">5.1.2</span>
</footer>

<div class="menu">
  <div class="it"><svg><use href="#undo"/></svg><span>復原</span><kbd>Ctrl Z</kbd></div>
  <div class="it dis"><svg><use href="#redo"/></svg><span>重做</span><kbd>Shift Ctrl Z</kbd></div>
  <div class="it sub"><span>復原紀錄</span><svg class="tri"><use href="#tri"/></svg></div>
  <hr>
  <div class="it"><span>調整上一個操作...</span><kbd>F9</kbd></div>
  <div class="it"><span>重復上一步</span><kbd>Shift R</kbd></div>
  <div class="it"><span>重復歷史操作...</span></div>
  <hr>
  <div class="it"><svg><use href="#search"/></svg><span>選單搜尋...</span><kbd>F3</kbd></div>
  <hr>
  <div class="it"><span>重新命名作用中項目...</span><kbd>F2</kbd></div>
  <div class="it"><span>批次重新命名...</span><kbd>Ctrl F2</kbd></div>
  <hr>
  <div class="it"><svg><use href="#check"/></svg><span>鎖定物體模式</span></div>
  <hr>
  <div class="it hot"><svg><use href="#gear"/></svg><span>偏好設定...</span><kbd>Ctrl ,</kbd></div>
</div>
<div class="mark"></div>
<script src="scene.js"></script>
</body>
</html>
```

FILE: styles.css
```css
* { box-sizing: border-box; }
html, body { margin: 0; height: 100%; }
body {
  width: 2879px; height: 1715px; overflow: hidden; position: relative;
  display: flex; flex-direction: column;
  background: #181818; color: #e0e0e0;
  font: 19px/22px Inter, "Noto Sans CJK TC", sans-serif;
  font-variant-numeric: tabular-nums;
}
svg { display: block; flex: none; width: 25px; height: 25px; overflow: visible; }
.defs { position: absolute; width: 0; height: 0; }
.s { fill: none; stroke: currentColor; }
.s:not([stroke-width]) { stroke-width: 1.8; }
.f { fill: currentColor; }
em, b, kbd, i { font-style: normal; font-weight: 400; font-family: inherit; font-size: inherit; }

/* title bar */
.titlebar { height: 38px; flex: none; display: flex; align-items: center; padding-left: 2px; }
.titlebar .logo { width: 27px; height: 27px; }
.titlebar h1 { margin: 0 0 0 10px; color: #fff; font: 20px/24px "Noto Sans", "Noto Sans CJK TC", sans-serif; white-space: nowrap; }
.win { margin-left: auto; display: flex; gap: 65px; padding-right: 35px; color: #fff; }
.win svg { width: 16px; height: 16px; }

/* top bar */
.topbar { height: 46px; flex: none; display: flex; align-items: center; }
.app { width: 31px; height: 31px; margin: 0 1px 0 9px; color: #d5d5d5; }
.m { width: 62px; height: 32px; margin-right: 2px; display: flex; align-items: center; justify-content: center; border-radius: 6px; }
.m.on { background: #303030; color: #fff; border-radius: 6px 6px 0 0; }
.vr { width: 1px; height: 34px; background: #353535; margin-left: 12px; }
.tabs { display: flex; gap: 2px; margin-left: 13px; }
.tabs a { height: 35px; padding: 0 16px; display: flex; align-items: center; background: #1d1d1d; color: #989898; border-radius: 8px; }
.tabs a.on { background: #303030; color: #fff; }
.tabs .add { padding: 0 6px 0 5px; }
.tabs .add svg { width: 20px; height: 20px; }

/* button groups */
.grp { display: flex; height: 33px; flex: none; border: 1px solid #404040; border-radius: 7px; overflow: hidden; background: #282828; color: #e6e6e6; }
.cell { display: flex; align-items: center; justify-content: center; flex: 1; border-left: 1px solid #3a3a3a; white-space: nowrap; }
.cell:first-child { border-left: 0; }
.cell.g { background: #545454; }
.cell.blue { background: #4772b3; color: #fff; }
.cell.dk { background: #2c2c2c; }
.cell.dd { justify-content: space-between; padding: 0 5px 0 6px; }
.c { width: 12px; height: 12px; margin-top: 3px; }
.b52 { width: 53px; }
.soft { color: #b8b8b8; }
.soft2 { color: #d0d0d0; }
.pale { color: #dbe5f5; }
.dim { color: #8a8a8a; }
.dim2 { color: #555; }
.flip { transform: scaleX(-1); }
.two { width: 66px; }
.one { width: 33px; }
.sel { height: 34px; }
.sel .cell.dd { flex: none; width: 52px; }
.sel .name { background: #1d1d1d; justify-content: space-between; padding: 0 6px 0 12px; }
.sel .cell.g, .sel .cell.off { flex: none; width: 34px; }
.sel .off { background: #303030; color: #4c4c4c; }
.scene-sel { width: 290px; margin-left: auto; margin-right: 10px; }
.layer-sel { width: 256px; margin-right: 7px; }

/* editors */
main { display: flex; gap: 5px; padding: 1px 2px 0; height: 1591px; flex: none; }
.left, .right { display: flex; flex-direction: column; gap: 5px; }
.left { width: 2360px; }
.right { width: 510px; }
.area { position: relative; border: 1px solid #454545; border-radius: 11px; overflow: hidden; }

.viewport { height: 1470px; background: #3e3e3e; }
.grid { position: absolute; left: 0; top: 0; width: 2358px; height: 1468px; }
.cursor { position: absolute; left: 1163.500px; top: 449px; width: 56px; height: 70px; }
.vhead { position: relative; height: 45px; display: flex; align-items: center; padding: 0 14px 4px 15px; background: rgba(48, 48, 48, .85); }
.mode { width: 147px; margin-left: 9px; }
.mode .cell { justify-content: flex-start; padding-left: 7px; }
.objmenu { margin-left: 216px; }
.orient { width: 104px; margin-left: 503px; }
.orient em { margin-left: 8px; }
.pivot { margin-left: 9px; }
.snapg { width: 87px; margin-left: 10px; }
.snapg .g { flex: none; width: 32px; }
.snapg .cell.dd { padding: 0 4px 0 3px; }
.snapg + .snapg { margin-left: 9px; }
.faded { border-color: #3a3a3a; background: #2e2e2e; }
.faded .g { background: #4c4c4c; }
.faded .dim { color: #666; }
.visg { margin-left: auto; }
.vhead .two, .vhead .one, .shade { margin-left: 10px; }
.shade { width: 165px; }
.vsub { position: relative; display: flex; justify-content: space-between; }
.slab { height: 42px; padding-top: 3px; background: rgba(48, 48, 48, .6); }
.sl { width: 250px; padding-left: 14px; }
.modes { width: 100px; }
.sr { width: 108px; padding-left: 14px; border-bottom-left-radius: 8px; }
.opts { width: 80px; }
.opts .cell.dd { padding: 0 4px 0 14px; }

.tools { position: relative; width: 68px; margin: 15px 0 0 14px; display: flex; flex-direction: column; gap: 10px; }
.tg { display: flex; flex-direction: column; gap: 1px; border-radius: 8px; overflow: hidden; background: #3a3a3a; box-shadow: 0 1px 1px rgba(0, 0, 0, .2); }
.t { position: relative; height: 57.500px; background: #282828; display: flex; align-items: center; justify-content: center; color: #e6e6e6; }
.t.on { background: #4772b3; height: 57px; }
.t svg { width: 42px; height: 41px; margin-bottom: 1px; }
.t i { position: absolute; right: 4px; bottom: 4px; border-left: 6px solid transparent; border-bottom: 6px solid #a0a0a0; }

.axes { position: absolute; left: 2211px; top: 109px; width: 120px; height: 120px; }
.axes text { font: 600 18.5px Inter, sans-serif; text-anchor: middle; }
.navs { position: absolute; left: 2295px; top: 254px; display: flex; flex-direction: column; gap: 4.400px; color: #d6d6d6; }
.navs svg { width: 48px; height: 48px; padding: 9px; border-radius: 50%; background: rgba(24, 24, 24, .55); }
.npanel { position: absolute; right: 0; top: 123px; width: 16px; height: 31px; background: #303030; border-radius: 4px 0 0 4px; display: flex; align-items: center; justify-content: center; color: #aaa; }
.npanel svg { width: 10px; height: 16px; margin-left: 2px; }

/* timeline */
.timeline { height: 115px; background: #212121; }
.thead { height: 43px; background: #303030; display: flex; align-items: center; padding: 0 13px 0 14px; }
.t1 { margin-left: 9px; }
.playb { width: 79px; margin-left: 8px; }
.playb .cell.dd { padding: 0 4px 0 12px; }
.rec { margin-left: 635px; width: 67px; border-color: #3a3a3a; }
.trans { width: 203px; margin-left: 10px; }
.jump { width: 101px; margin-left: 9px; }
.asn { margin-left: 9px; }
.frame { width: 125px; margin-left: 395px; }
.range { width: 329px; margin-left: 9px; }
.range .cell:first-child { flex: none; width: 32px; }
.num { justify-content: space-between; padding: 0 24px 0 28px; }
.num:last-child { padding: 0 23px 0 27px; }
.tov { margin-left: 28px; }
.ruler { height: 41px; background: #1d1d1d; color: #808080; display: flex; align-items: center; padding: 1px 0 0 130.500px; }
.ruler span { width: 105.300px; flex: none; text-align: center; }
.track { width: 2358px; height: 29px; }
.hscroll { position: absolute; left: 14px; top: 104px; width: 2328px; height: 5px; border-radius: 3px; background: rgba(90, 90, 90, .5); }
.vscroll { position: absolute; right: 3px; top: 87px; width: 6px; height: 28px; border-radius: 3px; background: #3f3f3f; }
.playhead { position: absolute; left: 67px; top: 46px; width: 40px; height: 34px; border-radius: 5px; background: #4772b3; color: #fff; display: flex; align-items: center; justify-content: center; }
.playhead::before { content: ""; position: absolute; left: 9px; top: 34px; border: 10px solid transparent; border-bottom: 0; border-top-color: #4772b3; }
.playhead::after { content: ""; position: absolute; left: 17.500px; top: 40px; width: 3px; height: 26px; background: #4772b3; }
.chan { position: absolute; left: 0; top: 79px; width: 15px; height: 33px; background: #1c1c1c; border-radius: 0 4px 4px 0; color: #888; display: flex; align-items: center; justify-content: center; }
.chan svg { width: 9px; height: 15px; margin-right: 2px; }

/* outliner */
.outliner { height: 292px; background: #282828; border-color: #3c3c3c; }
.ohead { height: 45px; display: flex; align-items: center; padding: 0 14px 4px 15px; background: #2b2b2b; }
.ohead .b52 + .b52 { margin-left: 8px; }
.find .cell { background: #1d1d1d; justify-content: flex-start; padding-left: 7px; color: #e6e6e6; }
.find em { color: #666; margin-left: 12px; }
.ohead .find { width: 200px; margin-left: 27px; }
.filt { margin-left: auto; margin-right: 10px; }
.row { height: 34px; display: flex; align-items: center; padding-left: 39px; }
.row:nth-child(even) { background: #2b2b2b; }
.row svg { width: 24px; height: 24px; color: #e0e0e0; }
.r0 span { margin-left: 11px; color: #c4c4c4; }
.row.r1 { padding: 0 20px 0 68px; gap: 10px; }
.r1 i { width: 33px; height: 31px; border-radius: 8px; background: #454545; border: 1px solid #606060; display: flex; align-items: center; justify-content: center; }
.r1 span { margin: 0 auto 0 -3px; color: #fff; }
.last { height: 40px; }

/* properties */
.props { height: 1293px; background: #303030; border-color: #3e3e3e; }
.phead { height: 44px; display: flex; align-items: center; padding: 0 14px 4px 15px; }
.phead .find { width: 199px; margin-left: 82px; margin-right: auto; }
.pbody { display: flex; height: 1248px; }
.ptabs { width: 48px; background: #181818; padding: 13px 0 0 2px; flex: none; display: flex; flex-direction: column; }
.ptabs a { height: 47px; display: flex; align-items: center; justify-content: center; background: #1d1d1d; border-radius: 8px 0 0 8px; color: #aaa; padding-right: 1px; }
.ptabs .solo { margin-bottom: 14px; }
.ptabs .on { background: #303030; color: #ccc; height: 47px; }
.ptabs .red { color: #b4525b; }
.ptabs .col { margin-top: 13px; color: #c8c8c8; }
.more { width: 14px; height: 14px; margin: 25px 0 0 16px; color: #555; }
.pmain { flex: 1; padding: 18px 14px 0 12px; }
.crumb { height: 26px; display: flex; align-items: center; padding-left: 6px; color: #e6e6e6; }
.crumb span { margin-left: 15px; }
.crumb .ar { width: 24px; height: 24px; margin: 0 11px 0 19px; }
.crumb .pn { margin-left: auto; margin-right: 4px; color: #a0a0a0; }
.idrow { margin: 31px 0 17px 2px; width: 431px; height: 34px; }
.panel { height: 42px; margin-bottom: 3px; border: 1px solid #474747; border-radius: 7px; background: #3d3d3d; }
.ph { height: 40px; display: flex; align-items: center; padding: 0 14px 0 9px; color: #e6e6e6; }
.ph > svg { margin-right: 3px; color: #c8c8c8; }
.dots { margin-left: auto; width: 20px; height: 8px; background: radial-gradient(circle, #8c8c8c 1px, transparent 1.500px) 0 -1px / 5.200px 5.200px; }
.cb { width: 22px; height: 22px; margin: 0 6px 0 -2px; border-radius: 4px; background: #4772b3; color: #fff; }
.cb svg { width: 22px; height: 22px; }
.panel.open { height: 189px; }
.open .ph { height: 42px; margin-bottom: 14px; }
.fld { display: flex; align-items: center; height: 33px; margin-bottom: 9px; padding-right: 14px; }
.fld label { width: 169px; text-align: right; margin-right: 16px; }
.fld div { flex: 1; height: 33px; border-radius: 6px; background: #1d1d1d; border-bottom: 1px solid #353535; display: flex; align-items: center; padding: 0 6px 0 7px; color: #e6e6e6; }
.fld em { margin-left: 12px; color: #5e5e5e; }
.dr { margin-left: auto; color: #c0c0c0; }

/* status bar */
footer { height: 40px; flex: none; display: flex; align-items: center; padding: 0 23px 1px 10px; color: #999; }
footer svg { width: 28px; height: 28px; margin-right: 1px; }
footer .m2 { margin: 0 -6px 0 18px; }
footer .gl { width: 24px; height: 24px; margin: 0 12px 0 auto; }
footer i { width: 1px; height: 24px; background: #777; margin-right: 7px; }

/* edit menu */
.menu { position: absolute; left: 105px; top: 91px; width: 327px; height: 445px; padding-top: 5.500px; background: #181818; border: 1px solid #242424; border-radius: 0 7px 7px 7px; box-shadow: 0 3px 10px rgba(0, 0, 0, .4); }
.it { position: relative; height: 34px; display: grid; grid-template-columns: 36px 1fr auto; align-items: center; margin: 0 4px; padding: 0 19px 0 13px; }
.it > svg { margin-bottom: 1px; }
.it > span { grid-column: 2; white-space: nowrap; }
.it kbd { color: #7a7a7a; }
.it.dis { color: #6c6c6c; }
.it.dis svg { color: #333; }
.it.dis kbd { color: #484848; }
.it .tri { width: 14px; height: 14px; margin-right: -12px; color: #989898; }
.menu hr { height: 1px; border: 0; background: #303030; margin: 5px 11px 6px 10px; }
.it.hot { color: #fff; }
.it.hot::before { content: ""; position: absolute; inset: 1px 0; border-radius: 6px; background: #3f3f3f; }
.it.hot > * { position: relative; }
.it.hot kbd { color: #9a9a9a; }
.mark { position: absolute; left: 88px; top: 475px; width: 372px; height: 76px; border: 3px solid #ff2a00; }
```

FILE: scene.js
```js
(function () {
  var NS = "http://www.w3.org/2000/svg";

  function line(parent, a, b, stroke, width) {
    var el = document.createElementNS(NS, "line");
    el.setAttribute("x1", a[0]); el.setAttribute("y1", a[1]);
    el.setAttribute("x2", b[0]); el.setAttribute("y2", b[1]);
    el.setAttribute("stroke", stroke);
    el.setAttribute("stroke-width", width);
    parent.appendChild(el);
  }

  /* Perspective projection of the ground plane: origin and the vanishing points of X and Y. */
  var O = [1193.3, 817.7], VX = [-971, 57], VY = [2710, 57], CX = -0.0906, CY = 0.10727;
  function project(x, y) {
    var w = 1 + CX * x + CY * y;
    return [0, 1].map(function (i) { return (O[i] + CX * VX[i] * x + CY * VY[i] * y) / w; });
  }
  /* Clip a plane line to the part in front of the camera. */
  function gridLine(parent, fixed, isX, stroke, width) {
    var near = 0.12, far = 400, k = isX ? CY : CX, base = 1 + (isX ? CX : CY) * fixed;
    var edge = (near - base) / k;
    var a = isX ? project(fixed, edge) : project(edge, fixed);
    var end = isX ? Math.max(edge + 1, far) : Math.min(edge - 1, -far);
    var b = isX ? project(fixed, end) : project(end, fixed);
    line(parent, a, b, stroke, width);
  }

  var grid = document.getElementById("grid");
  for (var n = -150; n <= 150; n++) {
    if (n === 0) continue;
    var major = n % 10 === 0;
    if (!major && Math.abs(n) > 80) continue;
    var paint = major ? "url(#fadeMajor)" : "url(#fadeMinor)";
    gridLine(grid, n, true, paint, 1.3);
    gridLine(grid, n, false, paint, 1.3);
  }
  gridLine(grid, 0, false, "#b9303f", 1.4);
  gridLine(grid, 0, true, "#5f9524", 1.4);

  var track = document.getElementById("track");
  for (var f = -6; f <= 252; f += 6) {
    var x = Math.round(80.9 + f * 8.775) + 0.5;
    line(track, [x, 1645], [x, 1674], f % 12 === 0 ? "#161616" : "#272727", f % 12 === 0 ? 1.4 : 1);
  }
  line(track, [2274.5, 1645], [2274.5, 1674], "#0c0c0c", 1.5);
})();
```
